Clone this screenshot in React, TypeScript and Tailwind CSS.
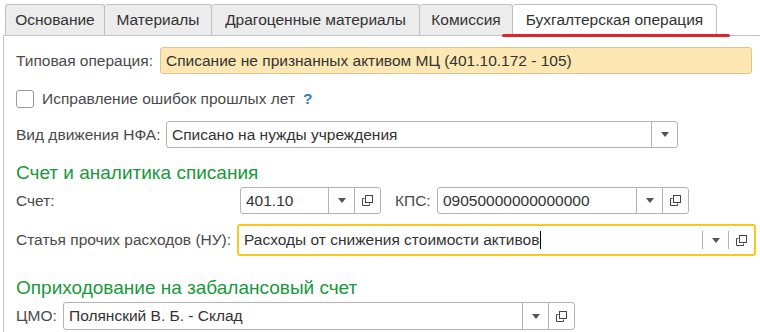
import React from 'react';

const tabs = [
  {title: 'Основание', w: 'w-[100px]'},
  {title: 'Материалы', w: 'w-[107px]'},
  {title: 'Драгоценные материалы', w: 'w-[208px]'},
  {title: 'Комиссия', w: 'w-[93px]'},
];

const Arrow = () => (
  <svg width="8" height="5" viewBox="0 0 8 5"><path d="M0 0h8L4 5z" fill="#555"/></svg>
);

const CopyIcon = () => (
  <svg width="13" height="13" viewBox="0 0 13 13" fill="none" stroke="#444" strokeWidth="1">
    <rect x="4.5" y="1.5" width="7" height="7"/>
    <path d="M3.5 4.5h-2v7h7v-2"/>
  </svg>
);

// поле ввода с кнопками выбора
const Field: React.FC<{value: string; w: string; copy?: boolean; focus?: boolean; h?: string}> = ({value, w, copy = true, focus, h = 'h-[27px]'}) => (
  <div
    className={`flex ${w} ${h} bg-white rounded-[3px] ${focus ? 'border-2 border-[#f7c81e]' : 'border border-[#b3b3b3]'}`}
  >
    <div className="flex-1 flex items-center px-[5px] text-[#333] whitespace-nowrap overflow-hidden">
      {value}
      {focus && <span className="inline-block w-px h-[18px] bg-black ml-px"/>}
    </div>
    <div className={`w-[26px] flex items-center justify-center border-l border-[#b3b3b3] ${focus ? 'my-[5px]' : ''}`}>
      <Arrow/>
    </div>
    {copy && (
      <div className={`w-[26px] flex items-center justify-center border-l border-[#b3b3b3] ${focus ? 'my-[5px]' : ''}`}>
        <CopyIcon/>
      </div>
    )}
  </div>
);

export default function App() {
  return (
    <div className="w-[760px] h-[332px] bg-white overflow-hidden font-['Liberation_Sans',Arial,sans-serif] text-[15.5px] text-[#4a4a4a]">
      {/* вкладки */}
      <div className="flex pl-[5px] pt-[4px] h-[35px]">
        {tabs.map((t, i) => (
          <div
            key={t.title}
            className={`${t.w} h-[31px] flex items-center justify-center bg-[#ececec] border-t border-r border-[#bfbfbf] rounded-t-[3px] text-[#333] ${i === 0 ? 'border-l' : ''}`}
          >
            {t.title}
          </div>
        ))}
        <div className="relative w-[204px] h-[32px] flex items-center justify-center bg-white border-t border-r border-[#bfbfbf] rounded-t-[3px] text-[#333] z-10 pb-px">
          Бухгалтерская операция
          <div className="absolute left-[-11px] right-[-14px] bottom-[-1px] h-[3px] bg-[#e2252b] rounded-full"/>
        </div>
      </div>

      <div className="ml-[3px] border-l border-t border-[#c4c4c4] pl-[12px] h-full">
        {/* типовая операция */}
        <div className="flex items-center mt-[11px] h-[27px]">
          <span className="w-[144px]">Типовая операция:</span>
          <div className="w-[592px] h-[27px] flex items-center px-[5px] bg-[#fde8b3] border border-[#dcc592] rounded-[3px] text-[#333]">
            Списание не признанных активом МЦ (401.10.172 - 105)
          </div>
        </div>

        <div className="flex items-center mt-[14px] h-[22px]">
          <div className="w-[18px] h-[18px] border border-[#9a9a9a] rounded-[3px] bg-white"/>
          <span className="ml-[8px]">Исправление ошибок прошлых лет</span>
          <span className="ml-[8px] text-[#2f7fc0] font-bold">?</span>
        </div>

        <div className="flex items-center mt-[11px] h-[27px]">
          <span className="w-[150px]">Вид движения НФА:</span>
          <Field value="Списано на нужды учреждения" w="w-[512px]" copy={false}/>
        </div>

        <div className="mt-[14px] h-[22px] leading-[22px] text-[19px] text-[#17993c]">
          Счет и аналитика списания
        </div>

        <div className="flex items-center mt-[3px] h-[27px]">
          <span className="w-[224px]">Счет:</span>
          <Field value="401.10" w="w-[141px]"/>
          <span className="ml-[14px] w-[42px]">КПС:</span>
          <Field value="09050000000000000" w="w-[252px]"/>
        </div>

        <div className="flex items-center mt-[10px] h-[32px]">
          <span className="w-[221px]">Статья прочих расходов (НУ):</span>
          <Field value="Расходы от снижения стоимости активов" w="w-[519px]" h="h-[32px]" focus/>
        </div>

        <div className="mt-[21px] h-[22px] leading-[22px] text-[19px] text-[#17993c]">
          Оприходование на забалансовый счет
        </div>

        <div className="flex items-center mt-[3px] h-[28px]">
          <span className="w-[47px]">ЦМО:</span>
          <Field value="Полянский В. Б. - Склад" w="w-[512px]" h="h-[28px]"/>
        </div>
      </div>
    </div>
  );
}
